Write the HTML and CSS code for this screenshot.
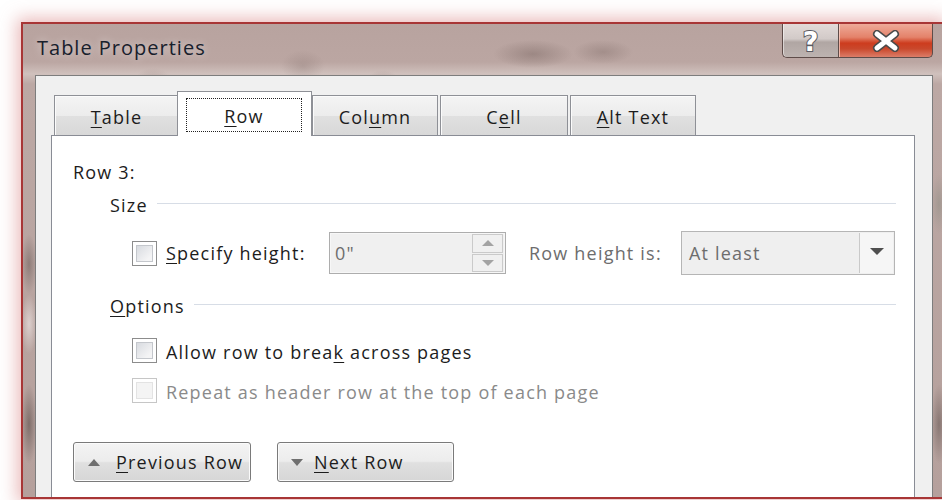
FILE: index.html
```html
<!DOCTYPE html>
<html lang="en">
<head>
<meta charset="utf-8">
<title>Table Properties</title>
<link rel="stylesheet" href="styles.css">
</head>
<body>
<div class="screen">
  <div class="window">
    <div class="titlebar">
      <span class="title">Table Properties</span>
      <div class="caption-buttons">
        <div class="cap-btn help"><span class="help-glyph">?</span></div>
        <div class="cap-btn close">
          <svg width="30" height="22" viewBox="0 0 30 22">
            <path d="M6 4 L24 18 M24 4 L6 18" stroke="#4a4a4a" stroke-width="8" stroke-linecap="round"/>
            <path d="M6 4 L24 18 M24 4 L6 18" stroke="#fff" stroke-width="5" stroke-linecap="round"/>
          </svg>
        </div>
      </div>
    </div>

    <div class="client">
      <div class="tabs">
        <div class="tab"><span><u>T</u>able</span></div>
        <div class="tab active"><span class="focus"><u>R</u>ow</span></div>
        <div class="tab">Col<u>u</u>mn</div>
        <div class="tab wide">C<u>e</u>ll</div>
        <div class="tab"><u>A</u>lt Text</div>
      </div>

      <div class="panel">
        <div class="row-name">Row 3:</div>

        <div class="group-head size-head"><span>Size</span><span class="rule"></span></div>
        <div class="size-row">
          <span class="checkbox"></span>
          <span class="field-label"><u>S</u>pecify height:</span>
          <div class="spin">
            <span class="spin-value">0"</span>
            <div class="spin-buttons">
              <span class="spin-btn"><span class="tri up"></span></span>
              <span class="spin-btn"><span class="tri down"></span></span>
            </div>
          </div>
          <span class="muted-label">Row height is:</span>
          <div class="select">
            <span class="select-value">At least</span>
            <span class="select-arrow"><span class="tri down dark"></span></span>
          </div>
        </div>

        <div class="group-head options-head"><span><u>O</u>ptions</span><span class="rule"></span></div>
        <div class="check-row allow-row">
          <span class="checkbox"></span>
          <span>Allow row to brea<u>k</u> across pages</span>
        </div>
        <div class="check-row repeat-row disabled">
          <span class="checkbox"></span>
          <span>Repeat as header row at the top of each page</span>
        </div>

        <div class="nav-buttons">
          <div class="nav-btn prev"><span class="tri up btn-tri"></span><span><u>P</u>revious Row</span></div>
          <div class="nav-btn next"><span class="tri down btn-tri"></span><span><u>N</u>ext Row</span></div>
        </div>
      </div>
    </div>
  </div>
</div>
</body>
</html>
```

FILE: styles.css
```css
* { box-sizing: border-box; }

html, body {
  margin: 0;
  padding: 0;
}

body {
  width: 942px;
  height: 500px;
  overflow: hidden;
  background: #ffffff;
  font-family: "Open Sans", "Noto Sans", sans-serif;
  font-size: 18px;
  letter-spacing: 1.2px;
  color: #1c1c1c;
}

u { text-decoration: underline; text-underline-offset: 3px; text-decoration-thickness: 1px; }

.screen {
  height: 500px;
  padding: 22px 0 0 21px;
}

/* Aero window frame */
.window {
  height: 477px;
  border: 2px solid #a83636;
  border-right: 0;
  box-shadow: 0 0 16px 4px rgba(214, 120, 120, 0.5);
  display: flex;
  flex-direction: column;
  background:
    radial-gradient(ellipse 40px 14px at 510px 30px, rgba(120, 100, 96, 0.45), transparent),
    radial-gradient(ellipse 30px 12px at 580px 28px, rgba(120, 100, 96, 0.35), transparent),
    radial-gradient(ellipse 20px 16px at 130px 60px, rgba(120, 100, 96, 0.3), transparent),
    radial-gradient(ellipse 18px 14px at 360px 60px, rgba(120, 100, 96, 0.3), transparent),
    radial-gradient(ellipse 22px 16px at 280px 42px, rgba(120, 100, 96, 0.25), transparent),
    radial-gradient(ellipse 8px 40px at 6px 400px, rgba(90, 76, 72, 0.6), transparent),
    radial-gradient(ellipse 8px 30px at 6px 240px, rgba(90, 76, 72, 0.45), transparent),
    radial-gradient(ellipse 8px 30px at 6px 300px, rgba(250, 245, 244, 0.55), transparent),
    radial-gradient(ellipse 8px 40px at 916px 400px, rgba(90, 76, 72, 0.5), transparent),
    radial-gradient(ellipse 8px 30px at 916px 180px, rgba(140, 140, 130, 0.5), transparent),
    linear-gradient(#b8a39f 0, #bba6a2 38px, #d0c1bd 50px, #bca8a4 60px, #b5a09c 100%);
}

.titlebar {
  height: 51px;
  flex: none;
  display: flex;
  align-items: flex-start;
}

.title {
  padding: 10px 0 0 14px;
  font-size: 20px;
  letter-spacing: 1px;
  color: #18202c;
  text-shadow: 0 0 8px rgba(255, 255, 255, 0.6);
}

.caption-buttons {
  margin-left: auto;
  margin-right: 9px;
  display: flex;
  height: 34px;
}

.cap-btn {
  height: 34px;
  display: flex;
  align-items: center;
  justify-content: center;
  border: 1px solid #5e4c49;
  border-top: 0;
}

.help {
  width: 56px;
  border-radius: 0 0 0 5px;
  border-right: 0;
  background: linear-gradient(#e2dad8, #d2cac8 45%, #b0a6a3 55%, #bdb3b0);
  box-shadow: inset 1px 0 0 rgba(255, 255, 255, 0.5);
}

.help-glyph {
  font-family: "DejaVu Sans", sans-serif;
  font-weight: bold;
  font-size: 27px;
  letter-spacing: 0;
  line-height: 1;
  color: #ffffff;
  -webkit-text-stroke: 2px #5a5a62;
  paint-order: stroke fill;
  margin-top: 2px;
}

.close {
  width: 95px;
  border-radius: 0 0 5px 0;
  background: linear-gradient(#eeaa99, #e4826a 40%, #cd3c1e 58%, #c9482c 75%, #dc7d68);
  box-shadow: inset 1px 0 0 rgba(255, 220, 210, 0.7);
}

/* Dialog client area */
.client {
  flex: 1;
  margin: 0 9px 0 12px;
  border: 1px solid #7d7d7d;
  border-bottom: 0;
  background: #f0f0f0;
  padding: 15px 17px 0 15px;
  display: flex;
  flex-direction: column;
  overflow: hidden;
}

.tabs {
  display: flex;
  align-items: flex-end;
  gap: 2px;
  margin-left: 3px;
  height: 45px;
  position: relative;
  z-index: 1;
  margin-bottom: -1px;
}

.tab {
  width: 126px;
  height: 40px;
  margin-bottom: 1px;
  border: 1px solid #8e9096;
  border-bottom: 0;
  background: linear-gradient(#f4f4f4, #ececec 50%, #e0e0e0 52%, #d8d8d8);
  box-shadow: inset 1px 1px 0 #fbfbfb;
  display: flex;
  align-items: center;
  justify-content: center;
  padding-top: 2px;
}

.tab:first-child { width: 125px; }
.tab.wide { width: 128px; }

.tab.active {
  width: 135px;
  height: 45px;
  margin: 0 -2px 0 -4px;
  background: #ffffff;
  box-shadow: none;
  padding: 6px 9px 4px 8px;
  position: relative;
}

.focus {
  flex: 1;
  align-self: stretch;
  display: flex;
  align-items: center;
  justify-content: center;
  border: 1px dotted #222;
  padding-top: 2px;
}

.panel {
  flex: 1;
  background: #ffffff;
  border: 1px solid #898c95;
  border-bottom: 0;
  padding: 24px 18px 0 21px;
  display: flex;
  flex-direction: column;
}

.row-name { line-height: 24px; }

.group-head {
  display: flex;
  align-items: center;
  margin-left: 37px;
  line-height: 24px;
  gap: 9px;
}

.group-head .rule {
  flex: 1;
  height: 1px;
  background: #d7dde6;
  margin-top: -3px;
}

.size-head { margin-top: 9px; }

.size-row {
  margin-top: 14px;
  margin-left: 59px;
  height: 44px;
  display: flex;
  align-items: center;
}

.checkbox {
  width: 25px;
  height: 25px;
  flex: none;
  border: 1px solid #8c8c8c;
  background: #ffffff;
  padding: 3px;
  display: flex;
}

.checkbox::before {
  content: "";
  flex: 1;
  border: 1px solid #c4c7cc;
  background: linear-gradient(135deg, #d8dbe0, #f4f4f5 80%);
}

.field-label {
  width: 172px;
  padding-left: 9px;
  flex: none;
}

.spin {
  width: 177px;
  height: 42px;
  flex: none;
  border: 1px solid #adadad;
  background: #f0f0f0;
  box-shadow: inset 0 0 0 1px #f7f7f7;
  display: flex;
  align-items: center;
  padding: 0 2px 0 5px;
}

.spin-value {
  flex: 1;
  color: #6d6d6d;
}

.spin-buttons {
  width: 31px;
  height: 38px;
  display: flex;
  flex-direction: column;
  gap: 1px;
}

.spin-btn {
  flex: 1;
  border: 1px solid #cacaca;
  background: #f0f0f0;
  display: flex;
  align-items: center;
  justify-content: center;
}

.tri {
  width: 0;
  height: 0;
  border-left: 6px solid transparent;
  border-right: 6px solid transparent;
}
.tri.up { border-bottom: 6px solid #a3a3a3; }
.tri.down { border-top: 6px solid #a3a3a3; }
.tri.down.dark { border-top-color: #4f4f4f; border-left-width: 7px; border-right-width: 7px; border-top-width: 7px; }

.muted-label {
  width: 152px;
  flex: none;
  margin-left: 23px;
  color: #6d6d6d;
}

.select {
  width: 214px;
  height: 44px;
  flex: none;
  border: 1px solid #b5b5b5;
  background: #efefef;
  display: flex;
  align-items: stretch;
}

.select-value {
  flex: 1;
  display: flex;
  align-items: center;
  padding-left: 7px;
  color: #6d6d6d;
}

.select-arrow {
  width: 34px;
  margin: 1px;
  border-left: 1px solid #c9c9c9;
  background: #f6f6f6;
  display: flex;
  align-items: center;
  justify-content: center;
  padding-bottom: 3px;
}

.options-head { margin-top: 19px; }

.check-row {
  margin-left: 59px;
  height: 26px;
  display: flex;
  align-items: center;
  gap: 9px;
}

.check-row > span:last-child { padding-top: 3px; }

.allow-row { margin-top: 19px; }
.repeat-row { margin-top: 14px; }

.disabled { color: #8a8a8a; }
.disabled .checkbox { border-color: #c6c6c6; }
.disabled .checkbox::before { border-color: #e3e3e3; background: #f4f4f4; }

.nav-buttons {
  margin-top: 39px;
  display: flex;
  gap: 26px;
}

.nav-btn {
  height: 40px;
  border: 1px solid #7a7a7a;
  border-radius: 3px;
  background: linear-gradient(#f4f4f4, #ececec 48%, #e0e0e0 52%, #d6d6d6);
  box-shadow: inset 0 0 0 1px #fbfbfb;
  display: flex;
  align-items: center;
  padding-left: 14px;
}

.nav-btn.prev { width: 178px; gap: 16px; }
.nav-btn.next { width: 177px; gap: 11px; padding-left: 13px; }

.btn-tri.up { border-bottom-color: #6f6f6f; border-bottom-width: 7px; }
.btn-tri.down { border-top-color: #6f6f6f; border-top-width: 7px; }
```
